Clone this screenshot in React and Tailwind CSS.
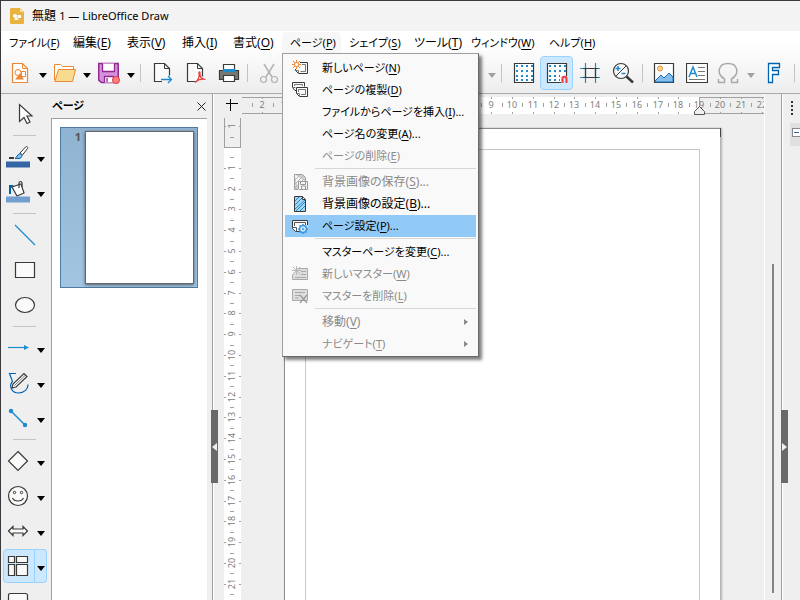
import React from 'react';
import clsx from 'clsx';

const STEP = 20.8;

const menus = [
  { label: "ファイル", k: "F", w: "w-16" },
  { label: "編集", k: "E", w: "w-[54px]" },
  { label: "表示", k: "V", w: "w-[55px]" },
  { label: "挿入", k: "I", w: "w-[51px]" },
  { label: "書式", k: "O", w: "w-[57px]" },
  { label: "ページ", k: "P", w: "w-[59px]", open: true },
  { label: "シェイプ", k: "S", w: "w-[65px]" },
  { label: "ツール", k: "T", w: "w-[57px]" },
  { label: "ウィンドウ", k: "W", w: "w-[78px]" },
  { label: "ヘルプ", k: "H", w: "w-[60px]" },
];

const pageMenu = [
  [
    { label: "新しいページ", k: "N", icon: "newPage" },
    { label: "ページの複製", k: "D", icon: "dupPage" },
    { label: "ファイルからページを挿入", k: "I", more: true },
    { label: "ページ名の変更", k: "A", more: true },
    { label: "ページの削除", k: "E", off: true },
  ],
  [
    { label: "背景画像の保存", k: "S", more: true, icon: "bgSave", off: true },
    { label: "背景画像の設定", k: "B", more: true, icon: "bgSet" },
    { label: "ページ設定", k: "P", more: true, icon: "pageSetup", active: true },
  ],
  [
    { label: "マスターページを変更", k: "C", more: true },
    { label: "新しいマスター", k: "W", icon: "newMaster", off: true },
    { label: "マスターを削除", k: "L", icon: "delMaster", off: true },
  ],
  [
    { label: "移動", k: "V", off: true, sub: true },
    { label: "ナビゲート", k: "T", off: true, sub: true },
  ],
];

const menuIcons = {
  newPage: (
    <>
      <path d="M8 2.500h7.500v11H6.500l-3-3V9" fill="#fafafa" stroke="#3a3a38" />
      <path d="M10 4.500h3.500v7h-5M3.500 10.500h3v3" stroke="#797774" />
      <path d="M4.500 0v9M0 4.500h9M1 1l7 7M8 1L1 8" stroke="#ed8733" />
      <circle cx="4.500" cy="4.500" r="2" fill="#fff" stroke="#ed8733" />
    </>
  ),
  dupPage: (
    <>
      <path d="M4 8.500H3l-2.500-3v-5h12v4" fill="#fafafa" stroke="#3a3a38" />
      <path d="M2.500 4V2.500h8V4M.5 5.500h3" stroke="#797774" />
      <path d="M4.500 5.500h11v9H7.500l-3-3z" fill="#fafafa" stroke="#3a3a38" />
      <path d="M6.500 10V7.500h7v5H9M4.500 11.500h3v3" stroke="#797774" />
    </>
  ),
  bgSave: (
    <>
      <path d="M2.500.5h8l3 3v4M2.500.5v15h4" fill="#cfcfcf" stroke="#a0a0a0" />
      <path d="M3 6l5-5M3 10l8-8M3 14l9-9" stroke="#b4b4b4" />
      <path d="M6.500 7.500h9v8h-8l-1-1z" fill="#f5f5f5" stroke="#999" />
      <path d="M8.500 7.500v3h5v-3M9.500 15v-3h4v3" stroke="#999" />
    </>
  ),
  bgSet: (
    <>
      <path d="M2.500.5h8l3 3v12h-11z" fill="#a9d3f3" stroke="#3a3a38" />
      <path d="M3 5l4-4M3 9l8-8M3 13l10-9M4 15l9-9M8 15l5-5" stroke="#1e8bcd" />
      <path d="M10.500 1v2.500H13" fill="#fff" stroke="#3a3a38" />
    </>
  ),
  pageSetup: (
    <>
      <path d="M.5 2.500h15v8l-5 3h-7l-3-3z" fill="#fafafa" />
      <path d="M8 13.500H3.500l-3-3v-8h15V7" stroke="#3a3a38" />
      <path d="M2.500 8V4.500h11V7M.5 9.500h4v4" stroke="#555" />
      <circle cx="11" cy="11" r="3.500" fill="#cde7f8" stroke="#3a96e0" strokeWidth="1.500" />
      <path d="M11 6v2M11 14v2M6 11h2M14 11h2M7.500 7.500L9 9M13 13l1.500 1.500M14.500 7.500L13 9M9 13l-1.500 1.500" stroke="#3a96e0" strokeWidth="1.500" />
      <circle cx="11" cy="11" r="1" fill="#3a96e0" />
    </>
  ),
  newMaster: (
    <>
      <path d="M5.500 2.500h10v11H.5v-5" fill="#dedede" stroke="#a9a9a9" />
      <path d="M9 5.500h5M9 8.500h5M3 11.500h11" stroke="#a9a9a9" />
      <path d="M4.500 0v9M0 4.500h9M1 1l7 7M8 1L1 8" stroke="#bababa" />
    </>
  ),
  delMaster: (
    <>
      <path d="M.5 1.500h15v11H.5z" fill="#dedede" stroke="#a9a9a9" />
      <path d="M3 4.500h10M3 7.500h5M3 10h4" stroke="#a9a9a9" />
      <path d="M8 7l7 8M15 7l-7 8" stroke="#999" strokeWidth="1.200" />
    </>
  ),
};

function Svg({ size = 22, children, className }) {
  return (
    <svg width={size} height={size} viewBox={`0 0 ${size} ${size}`} className={clsx("block shrink-0", className)} fill="none">
      {children}
    </svg>
  );
}

function Arrow({ off, label = "オプション", className, size = "h-8 w-4" }) {
  return (
    <button aria-label={label} className={clsx("flex shrink-0 items-center justify-center pt-[6px]", size, className)}>
      <svg width="8" height="5" viewBox="0 0 8 5" className="shrink-0">
        <path d="M0 0h8L4 5z" fill={off ? "#a0a0a0" : "#000"} />
      </svg>
    </button>
  );
}

function Tool({ label, className, children }) {
  return (
    <button aria-label={label} title={label} className={clsx("shrink-0", className)}>
      <Svg>{children}</Svg>
    </button>
  );
}

const Sep = ({ className }) => <div className={clsx("h-[18px] w-px shrink-0 bg-[#c3c3c3]", className)} />;

function Label({ item }) {
  return (
    <span className={/[ァ-ヶ]{2}|ージ/.test(item.label) ? "text-[11px]" : "text-[12px]"}>
      {item.label}(<u className="underline-offset-2">{item.k}</u>){item.more && "..."}
    </span>
  );
}

function PageMenu() {
  return (
    <div role="menu" className="absolute left-0 top-[21px] z-20 w-[197px] border border-[#a0a0a0] border-r-[#696969] border-b-[#696969] bg-[#f9f9f9] px-[2px] pb-px pt-[3px] shadow-[3px_3px_3px_rgba(0,0,0,0.5)]">
      {pageMenu.map((group, i) => (
        <div key={i}>
          {i > 0 && <div className="ml-[30px] flex h-1 items-center"><div className="h-px w-full bg-[#d7d7d7]" /></div>}
          {group.map((item) => (
            <button
              key={item.label}
              role="menuitem"
              disabled={item.off}
              className={clsx(
                "flex h-[22px] w-full items-center whitespace-nowrap pl-[7px]",
                item.active && "bg-[#91c9f7]",
                item.off ? "text-[#8a8a8a]" : "text-black"
              )}
            >
              <span className="w-[30px] shrink-0">
                {item.icon && <Svg size={16}>{menuIcons[item.icon]}</Svg>}
              </span>
              <Label item={item} />
              {item.sub && (
                <svg width="4" height="6" viewBox="0 0 4 6" className="ml-auto mr-2">
                  <path d="M0 0l4 3-4 3z" fill="#8a8a8a" />
                </svg>
              )}
            </button>
          ))}
        </div>
      ))}
    </div>
  );
}

function MenuBar() {
  return (
    <nav className="flex h-[23px] shrink-0 items-center">
      {menus.map((m) => (
        <div key={m.k} className={clsx("relative shrink-0", m.w)}>
          <button className={clsx("h-[22px] w-full whitespace-nowrap pl-2 text-left", m.open && "rounded-t bg-[#f7f7f7]")}>
            <Label item={m} />
          </button>
          {m.open && <PageMenu />}
        </div>
      ))}
    </nav>
  );
}

function ToolBar() {
  return (
    <div className="flex h-[39px] shrink-0 items-center pb-[2px] pl-2">
      <Tool label="新規">
        <path d="M3.500 1.500h10l5 5v14h-15z" fill="#fff" stroke="#ed8733" strokeWidth="1.200" />
        <path d="M13.500 1.500v5h5" stroke="#ed8733" />
        <circle cx="9" cy="10.500" r="3" stroke="#ed8733" />
        <path d="M12.500 9.500h4v5h-4z" stroke="#ed8733" />
        <path d="M11 11.500l4 6H6z" fill="#ed8733" />
      </Tool>
      <Arrow className="ml-1 mr-[3px]" />
      <Tool label="開く">
        <path d="M.5 18V2.500h6l2 2h11v3" fill="#fff" stroke="#ed8733" />
        <path d="M4.500 7.500h17l-3 12H.8z" fill="#f8db8f" stroke="#ed8733" />
      </Tool>
      <Arrow className="mx-[3px]" />
      <Tool label="保存">
        <path d="M.7 1.500h19.500v19H3.500l-2.800-2.500z" fill="#d493dd" stroke="#92278f" strokeWidth="1.500" />
        <path d="M4.500 1.500v8h12v-8M6.500 20.500v-6h9v6M9 16v4" fill="#fff" stroke="#92278f" strokeWidth="1.300" />
        <circle cx="18" cy="18" r="3.500" fill="#fc8080" stroke="#ed3d3b" />
      </Tool>
      <Arrow className="ml-[3px]" />
      <Sep className="ml-px mr-[11px]" />
      <Tool label="エクスポート" className="mr-[11px]">
        <path d="M10 19.500H2.500v-18h10l5 5v7" fill="#fafafa" stroke="#3a3a38" strokeWidth="1.200" />
        <path d="M12.500 1.500v5h5" stroke="#3a3a38" />
        <path d="M9 17.500h10M16 14l3.500 3.500L16 21" stroke="#1e8bcd" strokeWidth="1.300" />
      </Tool>
      <Tool label="PDF" className="mr-[11px]">
        <path d="M10 19.500H2.500v-18h10l5 5v8" fill="#fafafa" stroke="#3a3a38" strokeWidth="1.200" />
        <path d="M12.500 1.500v5h5" stroke="#3a3a38" />
        <path d="M10 20.500c3-2 4.500-6 4-9.500-.5-1.500 1.500-1.500 1 0-.5 4 2 6 5.500 6.500-4-1-7.500 0-10.500 3z" stroke="#ed3d3b" strokeWidth="1.200" />
      </Tool>
      <Tool label="印刷">
        <path d="M5.500 8V2.500h11V8" fill="#fff" stroke="#3a3a38" strokeWidth="1.200" />
        <path d="M1.500 8.500h19v9h-19z" fill="#797774" stroke="#3a3a38" strokeWidth="1.200" />
        <path d="M5 7h12v3H5z" fill="#1e8bcd" />
        <path d="M5.500 13.500h11v6h-11z" fill="#fff" stroke="#3a3a38" strokeWidth="1.200" />
      </Tool>
      <Sep className="ml-[7px] mr-[10px]" />
      <Tool label="切り取り" className="opacity-60">
        <path d="M6 2l8 13M16 2L8 15" stroke="#888" strokeWidth="1.500" />
        <circle cx="5.500" cy="17.500" r="3" stroke="#888" strokeWidth="1.200" />
        <circle cx="16.500" cy="17.500" r="3" stroke="#888" strokeWidth="1.200" />
      </Tool>
      <div className="w-[204px] shrink-0" />
      <Arrow off />
      <Sep className="ml-px mr-[11px]" />
      <Tool label="グリッドの表示">
        <path d="M1.500 1.500h19v19h-19z" fill="#fff" stroke="#3a3a38" strokeWidth="1.200" />
        <path d="M3 4h17M3 9h17M3 14h17M3 18h17" stroke="#1e8bcd" strokeWidth="2" strokeDasharray="2 3" />
      </Tool>
      <Tool label="グリッドに合わせる" className="ml-[5px] mr-[6px] flex h-[34px] w-[33px] items-center justify-center rounded-sm border border-[#99d1ff] bg-[#cce8ff]">
        <path d="M1.500 1.500h19v19h-19z" fill="#fff" stroke="#3a3a38" strokeWidth="1.200" />
        <path d="M3 4h17M3 9h17M3 14h11M3 18h11" stroke="#1e8bcd" strokeWidth="2" strokeDasharray="2 3" />
        <path d="M15 22h7v-8h-7z" fill="#cce8ff" />
        <path d="M16.500 21v-4c0-3 4-3 4 0v4" stroke="#ed3d3b" strokeWidth="2" />
      </Tool>
      <Tool label="補助線" className="mr-[11px]">
        <path d="M6.500 1v20M16.500 1v20M1 6.500h20M1 15.500h20" stroke="#1e8bcd" strokeWidth="1.200" />
        <path d="M4 6.500h15M4 15.500h15M6.500 6v10M16.500 6v10" stroke="#3a3a38" strokeWidth="1.200" />
      </Tool>
      <Tool label="ズーム">
        <circle cx="9" cy="9" r="7.500" fill="#fafafa" stroke="#3a3a38" strokeWidth="1.200" />
        <path d="M14.500 14.500l6.500 6" stroke="#3a3a38" strokeWidth="2.500" />
        <path d="M4 14L14 4" stroke="#3a3a38" />
        <path d="M3.500 6.500h5M6 4v5M9.500 11.500h4" stroke="#1e8bcd" strokeWidth="1.500" />
      </Tool>
      <Sep className="ml-2 mr-[10px]" />
      <Tool label="画像" className="mr-[11px]">
        <path d="M1.500 1.500h19v19h-19z" fill="#fff" stroke="#3a3a38" strokeWidth="1.200" />
        <circle cx="7" cy="6.500" r="2.500" fill="#f8db8f" stroke="#ed8733" />
        <path d="M2 19l6-6 3 3 5-5 4 4v5H2z" fill="#83beec" stroke="#1e6fb4" />
      </Tool>
      <Tool label="テキストボックス" className="mr-[9px]">
        <path d="M.5 1.500h21v19H.5z" fill="#fff" stroke="#3a3a38" strokeWidth="1.200" />
        <path d="M3 15L7 5l4 10M4.500 11.500h5" stroke="#1e8bcd" strokeWidth="1.500" />
        <path d="M12 5.500h7M12 9.500h7M12 13.500h7M3 17.500h16" stroke="#797774" />
      </Tool>
      <Tool label="特殊文字">
        <path d="M1.500 17v3.500h6V17C-1 12 1 1.500 11 1.500S23 12 14.500 17v3.500h6V17" stroke="#a9a9a9" strokeWidth="1.500" />
      </Tool>
      <Arrow off className="mx-1" />
      <Tool label="フォントワーク">
        <path d="M5.500 1.500h11v4h-7v3h6v4h-6v8h-4z" fill="#fff" stroke="#0063b1" strokeWidth="1.300" />
      </Tool>
      <Sep className="ml-[9px]" />
    </div>
  );
}

const drawTools = [
  [
    { label: "選択", icon: <path d="M5.500 1.500v17l4.500-4 3 6 3-1.500-3-6h5z" fill="#fff" stroke="#3a3a38" strokeWidth="1.200" /> },
  ],
  [
    {
      label: "線の色", drop: true, icon: (
        <>
          <path d="M2 12h5" stroke="#3a3a38" strokeWidth="2" />
          <path d="M13 7l5.500-6c1-1 3 0 2 1.500l-5 6.500z" fill="#fff" stroke="#3a3a38" />
          <path d="M8 12.500c2-1 2-4 5-5 3 1 2 5-1 5z" fill="#83beec" stroke="#0063b1" />
          <path d="M-1 15.500h24v6H-1z" fill="#3465a4" />
        </>
      )
    },
    {
      label: "塗りつぶしの色", drop: true, icon: (
        <>
          <path d="M2 13V4h5L4 7v6z" fill="#0063b1" />
          <path d="M5 6l9-3 3 9-7 3z" fill="#fff" stroke="#3a3a38" strokeWidth="1.200" />
          <path d="M12 7V2c0-2 3-2 3 0v4" stroke="#3a3a38" strokeWidth="1.200" />
          <path d="M-1 15.500h24v6H-1z" fill="#729fcf" />
        </>
      )
    },
  ],
  [
    { label: "直線", icon: <path d="M1 1l20 20" stroke="#1e8bcd" strokeWidth="1.200" /> },
    { label: "四角形", icon: <path d="M1.500 3.500h19v15h-19z" fill="#fafafa" stroke="#3a3a38" strokeWidth="1.200" /> },
    { label: "楕円", icon: <ellipse cx="11" cy="11" rx="9.500" ry="7.500" fill="#fafafa" stroke="#3a3a38" strokeWidth="1.200" /> },
  ],
  [
    { label: "線と矢印", drop: true, icon: <><path d="M1 10.500h16" stroke="#1e8bcd" strokeWidth="1.200" /><path d="M17 8l5 2.500-5 2.500z" fill="#1e8bcd" /></> },
    {
      label: "曲線と多角形", drop: true, icon: (
        <>
          <path d="M9 1.500H2.500l3 8c-4 4-1 11.500 6 11.500 6 0 9.500-4 9.500-8.500" stroke="#0063b1" strokeWidth="1.200" />
          <path d="M5 16l1-4L17 1.500l3 3L9 15z" fill="#fff" stroke="#3a3a38" strokeWidth="1.200" />
          <path d="M7.500 13.500L18 3.500" stroke="#797774" />
        </>
      )
    },
    { label: "コネクター", drop: true, icon: <><path d="M4 4l14 14" stroke="#1e8bcd" strokeWidth="1.500" /><circle cx="4" cy="4" r="2.200" fill="#1e8bcd" /><circle cx="18" cy="18" r="2.200" fill="#1e8bcd" /></> },
  ],
  [
    { label: "基本図形", drop: true, icon: <path d="M11 1.500l9.500 9.500-9.500 9.500L1.500 11z" fill="#fafafa" stroke="#3a3a38" strokeWidth="1.200" /> },
    {
      label: "記号図形", drop: true, icon: (
        <>
          <circle cx="11" cy="11" r="9.500" fill="#fafafa" stroke="#3a3a38" strokeWidth="1.200" />
          <circle cx="7.500" cy="7.500" r="1.200" stroke="#3a3a38" />
          <circle cx="14.500" cy="7.500" r="1.200" stroke="#3a3a38" />
          <path d="M5.500 13c2 4 9 4 11 0" stroke="#3a3a38" strokeWidth="1.200" />
        </>
      )
    },
    { label: "ブロック矢印", drop: true, icon: <path d="M1.500 11l4.500-4.500V9h10V6.500L20.500 11 16 15.500V13H6v2.500z" fill="#fafafa" stroke="#3a3a38" strokeWidth="1.200" /> },
    { label: "フローチャート", drop: true, active: true, icon: <path d="M1.500 1.500h6v6h-6zM9.500 1.500h11v6h-11zM1.500 9.500h6v11h-6zM9.500 9.500h11v11h-11z" fill="#fafafa" stroke="#3a3a38" strokeWidth="1.200" /> },
    { label: "吹き出し", icon: <path d="M1.500 3.500c0-1.500.5-2 2-2h15c1.500 0 2 .5 2 2v11h-19z" fill="#fafafa" stroke="#3a3a38" strokeWidth="1.200" />, callout: true },
  ],
];

function DrawBar() {
  return (
    <div className="flex w-[50px] shrink-0 flex-col pt-[2px]">
      {drawTools.map((group, i) => (
        <div key={i}>
          {i > 0 && <div className="flex h-2 items-center pl-3"><div className="h-px w-[23px] bg-[#c3c3c3]" /></div>}
          {group.map((t) => (
            <div key={t.label} className={clsx("flex h-[35px] items-center", t.drop || t.callout ? "pl-[2px]" : "pl-[9px]")}>
              <button
                aria-label={t.label}
                className={clsx("flex h-[34px] items-center justify-center border", t.drop || t.callout ? "w-8 pr-[2px]" : "w-[30px]", t.active ? "rounded-l-sm border-[#99d1ff] bg-[#cce8ff]" : "border-transparent", t.callout && "pt-1")}
              >
                <Svg className="overflow-visible">{t.icon}</Svg>
              </button>
              {t.drop && (
                <Arrow size="h-[34px] w-3" className={clsx("border-y border-r", t.active ? "rounded-r-sm border-[#99d1ff] bg-[#cce8ff]" : "border-transparent")} />
              )}
            </div>
          ))}
        </div>
      ))}
    </div>
  );
}

function PagePanel() {
  return (
    <aside className="flex w-[161px] shrink-0 flex-col">
      <div className="flex h-6 shrink-0 items-center justify-between pl-px pr-[6px]">
        <h2 className="text-[11px] font-bold">ページ</h2>
        <button aria-label="閉じる">
          <svg width="9" height="9" viewBox="0 0 9 9"><path d="M.5.5l8 8M8.500.5l-8 8" stroke="#222" /></svg>
        </button>
      </div>
      <div className="mr-[5px] flex-1 border-l border-t border-[#a0a0a0] bg-white pl-2 pt-2">
        <div className="flex h-[161px] w-[138px] border border-[#4f7ba3] bg-linear-to-b from-[#90b3d1] to-[#a2c5e1] pb-[3px] pt-[3px]">
          <span className="w-6 pr-1 text-right text-[11px] font-bold leading-3 text-[#555]">1</span>
          <div className="w-[109px] border border-[#666] bg-white shadow-[0_1px_3px_rgba(0,0,0,0.5)]" />
        </div>
      </div>
    </aside>
  );
}

function Splitter({ dir }) {
  return (
    <div className="relative w-[2px] shrink-0 border-l border-[#a0a0a0] bg-white">
      <button aria-label="サイドバーの切り替え" className={clsx("absolute top-[316px] z-10 flex h-[73px] w-[7px] items-center justify-center bg-[#696969]", dir === "left" ? "-left-[2px]" : "-left-px")}>
        <svg width="5" height="8" viewBox="0 0 5 8">
          <path d={dir === "left" ? "M5 0v8L0 4z" : "M0 0v8l5-4z"} fill="#f0f0f0" />
        </svg>
      </button>
    </div>
  );
}

function HRuler() {
  const at = (n) => Math.round(62 + n * STEP);
  const marks = Array.from({ length: 25 }, (_, i) => i - 2);
  return (
    <svg width="100%" height="19" className="block shrink-0">
      <path d={`M0 .5H${at(0)}V16.500H0`} fill="none" stroke="#a0a0a0" />
      <rect x={at(0)} y="0" width={at(19) - at(0)} height="17" fill="#fff" />
      <path d={`M800 .5H${at(19)}.5V16.500H800`} fill="none" stroke="#a0a0a0" />
      {marks.map((n) => (
        <g key={n}>
          <path d={`M${at(n)}.5 0v2M${at(n)}.5 15v2M${at(n - 0.5)}.5 6v4`} stroke="#a0a0a0" />
          {n !== 0 && <text x={at(n)} y="11" textAnchor="middle" fontSize="9" fill="#808080">{Math.abs(n)}</text>}
        </g>
      ))}
      <path d={`M${at(19) - 5}.5 17.500v-3l5-5 5 5v3z`} fill="#f0f0f0" stroke="#555" />
    </svg>
  );
}

function VRuler() {
  const at = (n) => Math.round(29 + n * STEP);
  const marks = Array.from({ length: 23 }, (_, i) => i - 1);
  return (
    <svg width="17" className="ml-[10px] block min-h-0 flex-1">
      <path d={`M.5 0V${at(0)}.5H16.500V0`} fill="none" stroke="#a0a0a0" />
      <rect x="0" y={at(0) + 1} width="17" height="900" fill="#fff" />
      {marks.map((n) => (
        <g key={n}>
          <path d={`M0 ${at(n)}.5h2M15 ${at(n)}.5h2M6 ${at(n + 0.5)}.5h4`} stroke="#a0a0a0" />
          {n !== 0 && (
            <text transform={`translate(11 ${at(n)}) rotate(-90)`} textAnchor="middle" fontSize="9" fill="#808080">{Math.abs(n)}</text>
          )}
        </g>
      ))}
    </svg>
  );
}

function Workspace() {
  return (
    <main className="flex min-w-0 flex-1">
      <div className="flex w-7 shrink-0 flex-col">
        <svg width="14" height="14" viewBox="0 0 14 14" className="mb-[6px] ml-[11px] mt-1 block shrink-0">
          <path d="M5.500 1v12M1 5.500h12" stroke="#000" />
        </svg>
        <VRuler />
      </div>
      <div className="flex min-w-0 flex-1 flex-col overflow-hidden pt-[3px]">
        <HRuler />
        <div className="min-h-0 flex-1 overflow-hidden pl-[42px] pt-3">
          <div className="relative h-[618px] w-[437px] border border-[#8c8c8c] border-r-[#b4b4b4] bg-white p-5 shadow-[1px_0_2px_rgba(0,0,0,0.25)]">
            <div className="absolute -right-px -top-px h-[9px] w-px bg-[#444]" />
            <div className="h-full border border-[#c8c8c8]" />
          </div>
        </div>
      </div>
      <div className="w-[17px] shrink-0 border-l border-white pl-[7px] pt-[170px]">
        <div className="h-[329px] w-[2px] bg-[#858585]" />
      </div>
    </main>
  );
}

function SideBar() {
  return (
    <aside className="flex w-[17px] shrink-0 flex-col items-end overflow-hidden pt-[7px]">
      <button aria-label="サイドバーの設定" className="mr-[5px] flex w-[6px] flex-col items-center gap-[2px]">
        {[0, 1, 2, 3].map((i) => <span key={i} className="size-[2px] bg-[#333]" />)}
      </button>
      <div className="mt-2 flex h-[23px] w-[10px] shrink-0 items-start bg-[#e0e0e0] pl-[2px] pt-[5px]">
        <button aria-label="折りたたむ" className="flex h-[9px] w-[9px] shrink-0 items-center justify-center border border-[#888] bg-white">
          <span className="h-px w-[5px] bg-[#3465a4]" />
        </button>
      </div>
    </aside>
  );
}

export default function App() {
  return (
    <div className="flex h-screen flex-col overflow-hidden border-l border-t border-[#3b3840] bg-[#efefef] font-['Noto_Sans','Noto_Sans_CJK_JP',sans-serif] text-[12px] leading-4 text-black [font-feature-settings:'palt']">
      <header className="flex h-[30px] shrink-0 items-center gap-2 bg-[#f3f3f3] pl-[9px]">
        <svg width="14" height="16" viewBox="0 0 14 16">
          <path d="M1.500 0H10l4 4v10.500c0 1-.5 1.500-1.500 1.500h-11C.5 16 0 15.500 0 14.500v-13C0 .5.5 0 1.500 0z" fill="#e8b33f" />
          <path d="M10 0l4 4h-4z" fill="#f5dc9a" />
          <circle cx="5" cy="8" r="2" fill="#fff" />
          <path d="M7.500 7H11v3H7.500zM6.500 9L9 12H4z" fill="#fff" />
        </svg>
        <h1>無題 <span className="text-[11px]">1 — LibreOffice Draw</span></h1>
      </header>
      <div className="relative z-20 flex shrink-0 flex-col border-b border-[#a9a9a9] bg-linear-to-b from-white from-20% to-[#ededed]">
        <MenuBar />
        <ToolBar />
      </div>
      <div className="flex min-h-0 flex-1">
        <DrawBar />
        <PagePanel />
        <Splitter dir="left" />
        <Workspace />
        <Splitter dir="right" />
        <SideBar />
      </div>
    </div>
  );
}
